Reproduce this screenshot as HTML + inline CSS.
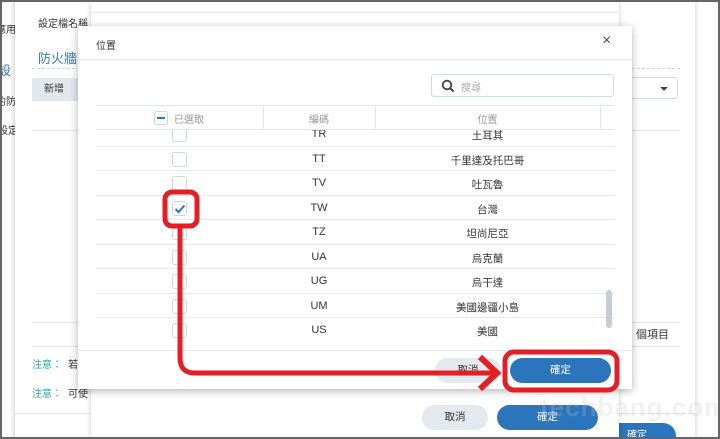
<!DOCTYPE html>
<html><head><meta charset="utf-8"><style>
*{margin:0;padding:0;box-sizing:border-box}
html,body{width:720px;height:439px;overflow:hidden}
body{position:relative;background:#fff;font-family:"Liberation Sans","Noto Sans CJK TC",sans-serif;color:#444;font-size:11px;white-space:nowrap}
.abs{position:absolute}
.frame{position:absolute;left:0;top:0;width:720px;height:439px;border:2px solid #666;z-index:50;pointer-events:none}
.row{position:absolute;left:96px;width:519px;height:24.5px;border-bottom:1px solid #e6eaee}
.row .cb{position:absolute;left:76px;top:5px;width:15px;height:15px;border:1px solid #cfd6de;border-radius:3px;background:#fff}
.row .c{position:absolute;left:167px;width:112px;text-align:center;top:6px;font-size:11px;color:#333}
.row .p{position:absolute;left:279px;width:225px;text-align:center;top:6px;font-size:10.5px;color:#333}
</style></head><body>
<div class="abs" style="left:0;top:0;width:16px;height:439px;background:#fff;font-size:10px;color:#333;overflow:hidden">
<div class="abs" style="left:-4px;top:21px">應用</div>
<div class="abs" style="left:-2px;top:60px;color:#3a78b8;font-size:13px">設</div>
<div class="abs" style="left:-4px;top:93px">的防</div>
<div class="abs" style="left:-2px;top:122px">設定</div>
</div>
<div class="abs" style="left:15px;top:0;width:680px;height:439px;background:#fff;box-shadow:-2px 0 4px rgba(0,0,0,.15),2px 0 4px rgba(0,0,0,.1)">
<div class="abs" style="left:23px;top:15px;font-size:10px;color:#333">設定檔名稱</div>
<div class="abs" style="left:23px;top:48px;font-size:13px;color:#3a78b8">防火牆</div>
<div class="abs" style="left:17px;top:68px;width:648px;border-top:1px dashed #cdd6e0"></div>
<div class="abs" style="left:17px;top:78px;width:62px;height:23px;background:#e3e8ee;border-radius:2px;font-size:10px;line-height:23px;padding-left:12px;color:#333">新增</div>
<div class="abs" style="left:615px;top:77px;width:48px;height:22px;border:1px solid #d5dbe2;border-radius:3px"><div class="abs" style="right:9px;top:9px;border-left:4px solid transparent;border-right:4px solid transparent;border-top:4px solid #444"></div></div>
<div class="abs" style="left:17px;top:107px;width:648px;height:24px;border-bottom:1px solid #e3e7ec"></div>
<div class="abs" style="left:17px;top:322px;width:648px;border-top:1px solid #e3e7ec"></div>
<div class="abs" style="left:17px;top:346px;width:648px;border-top:1px solid #e3e7ec"></div>
<div class="abs" style="left:621px;top:326px;font-size:11px;color:#333">個項目</div>
<div class="abs" style="left:17px;top:356px;font-size:10px;color:#2aa8a0">注意：<span style="color:#333;margin-left:6px">若</span></div>
<div class="abs" style="left:17px;top:385px;font-size:10px;color:#2aa8a0">注意：<span style="color:#333;margin-left:6px">可使</span></div>
<div class="abs" style="left:0;top:413px;width:680px;border-top:1px solid #e3e7ec"></div>
<div class="abs" style="left:583px;top:423px;width:78px;height:26px;background:#2a75bb;border-radius:13px;color:#fff;font-size:10px;text-align:center;line-height:26px">確定</div>
</div>
<div class="abs" style="left:91px;top:0;width:528px;height:439px;background:#fff;box-shadow:0 0 5px rgba(0,0,0,.2)">
<div class="abs" style="left:0;top:12px;width:528px;border-top:1px solid #e6eaee"></div>
<div class="abs" style="left:331px;top:405px;width:66px;height:25px;background:#e4e9ef;border-radius:13px;font-size:10.5px;text-align:center;line-height:25px;color:#333">取消</div>
<div class="abs" style="left:406px;top:405px;width:101px;height:25px;background:#2a75bb;border-radius:13px;font-size:10.5px;text-align:center;line-height:25px;color:#fff">確定</div>
</div>
<div class="abs" style="left:78px;top:26px;width:554px;height:363px;background:#fff;box-shadow:0 2px 8px rgba(0,0,0,.3);overflow:hidden">
<div class="abs" style="left:18px;top:11px;font-size:10px;color:#333">位置</div>
<div class="abs" style="left:524px;top:6px;font-size:16px;color:#555">×</div>
<div class="abs" style="left:0;top:33px;width:554px;border-top:1px solid #e3e7ec"></div>
<div class="abs" style="left:353px;top:48px;width:183px;height:23px;border:1px solid #d5dbe2;border-radius:3px">
<svg class="abs" style="left:9px;top:4px" width="14" height="14" viewBox="0 0 14 14"><circle cx="6" cy="6" r="4.3" fill="none" stroke="#444" stroke-width="1.8"/><path d="M9 9l3.5 3.5" stroke="#444" stroke-width="2"/></svg>
<div class="abs" style="left:29px;top:4px;font-size:10px;color:#aaa">搜尋</div>
</div>
<div class="abs" style="left:18px;top:79px;width:519px;height:25px;border-top:1px solid #e3e7ec;border-bottom:1px solid #e3e7ec">
<div class="abs" style="left:58px;top:5px;width:14px;height:14px;border:1px solid #cfd6de;border-radius:3px"><div class="abs" style="left:2px;top:5px;width:8px;height:2px;background:#2a75bb"></div></div>
<div class="abs" style="left:78px;top:5px;font-size:10px;color:#999">已選取</div>
<div class="abs" style="left:167px;top:0;height:24px;border-left:1px solid #e3e7ec"></div>
<div class="abs" style="left:167px;width:112px;text-align:center;top:5px;font-size:10px;color:#999">編碼</div>
<div class="abs" style="left:279px;top:0;height:24px;border-left:1px solid #e3e7ec"></div>
<div class="abs" style="left:279px;width:225px;text-align:center;top:5px;font-size:10px;color:#999">位置</div>
<div class="abs" style="left:504px;top:0;height:24px;border-left:1px solid #e3e7ec"></div>
</div>
</div>
<div class="abs" style="left:78px;top:130px;width:554px;height:220px;overflow:hidden">
<div style="position:relative;left:-78px;top:-130px">
<div class="row" style="top:122px"><div class="cb"></div><div class="c">TR</div><div class="p">土耳其</div></div>
<div class="row" style="top:146.5px"><div class="cb"></div><div class="c">TT</div><div class="p">千里達及托巴哥</div></div>
<div class="row" style="top:171px"><div class="cb"></div><div class="c">TV</div><div class="p">吐瓦魯</div></div>
<div class="row" style="top:195.5px"><div class="cb"><svg class="abs" style="left:1px;top:2px" width="12" height="10" viewBox="0 0 12 10"><path d="M1.5 5l3 3 6-6.5" fill="none" stroke="#2a75bb" stroke-width="2"/></svg></div><div class="c">TW</div><div class="p">台灣</div></div>
<div class="row" style="top:220px"><div class="cb"></div><div class="c">TZ</div><div class="p">坦尚尼亞</div></div>
<div class="row" style="top:244.5px"><div class="cb"></div><div class="c">UA</div><div class="p">烏克蘭</div></div>
<div class="row" style="top:269px"><div class="cb"></div><div class="c">UG</div><div class="p">烏干達</div></div>
<div class="row" style="top:293.5px"><div class="cb"></div><div class="c">UM</div><div class="p">美國邊疆小島</div></div>
<div class="row" style="top:318px;border-bottom:none"><div class="cb"></div><div class="c">US</div><div class="p">美國</div></div>
</div></div>
<div class="abs" style="left:606px;top:290px;width:6px;height:38px;background:#c8cdd3;border-radius:3px"></div>
<div class="abs" style="left:78px;top:350px;width:554px;border-top:1px solid #e3e7ec"></div>
<div class="abs" style="left:435px;top:358px;width:66px;height:25px;background:#e4e9ef;border-radius:13px;font-size:10.5px;text-align:center;line-height:25px;color:#333">取消</div>
<div class="abs" style="left:510px;top:358px;width:101px;height:25px;background:#2a75bb;border-radius:13px;font-size:10.5px;text-align:center;line-height:25px;color:#fff">確定</div>
<svg class="abs" style="left:0;top:0;z-index:20" width="720" height="439">
<rect x="165" y="192" width="32" height="34" rx="7" fill="none" stroke="#e31e24" stroke-width="5"/>
<rect x="505" y="352" width="112" height="38" rx="9" fill="none" stroke="#e31e24" stroke-width="5"/>
<path d="M180 226 V358 Q180 373 195 373 H495" fill="none" stroke="#e31e24" stroke-width="5"/>
<path d="M480 357 L497 373 L480 389" fill="none" stroke="#e31e24" stroke-width="6"/>
</svg>
<div class="abs" style="left:540px;top:392px;font-size:26px;font-weight:bold;color:rgba(200,200,200,.25);z-index:21;letter-spacing:1px">techbang.com</div>
<div class="frame"></div>
</body></html>
